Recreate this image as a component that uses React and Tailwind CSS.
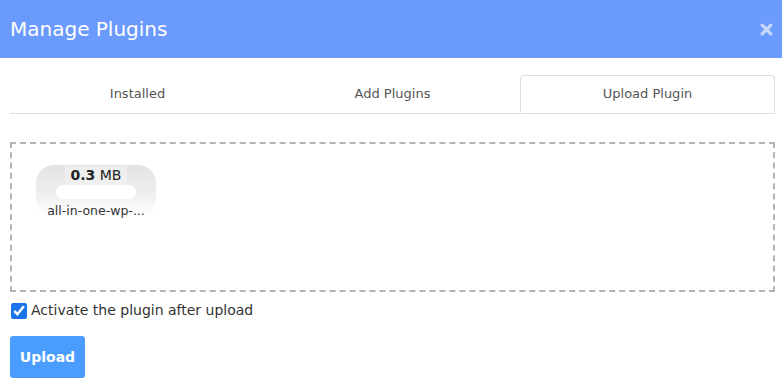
import { useState } from 'react';

export default function App() {
  const [tab, setTab] = useState('upload');
  const [activate, setActivate] = useState(true);

  const tabs = [
    { id: 'installed', label: 'Installed' },
    { id: 'add', label: 'Add Plugins' },
    { id: 'upload', label: 'Upload Plugin' },
  ];

  return (
    <div className="w-[782px] h-[385px] bg-white text-[#333] font-['DejaVu_Sans',sans-serif]">

      {/* HEADER */}
      <div className="h-[58px] bg-[#6b9aff] flex items-center justify-between pl-[10px] pr-[8px]">
        <h2 className="text-[20px] text-white">Manage Plugins</h2>
        <button className="text-[#c9d9fb] w-[16px] h-[16px] flex items-center justify-center">
          <svg width="13" height="13" viewBox="0 0 12 12">
            <path d="M2 2 L10 10 M10 2 L2 10" stroke="currentColor" strokeWidth="3" strokeLinecap="round" />
          </svg>
        </button>
      </div>

      <div className="px-[10px] pr-[7px]">

        {/* TABS */}
        <div className="mt-[17px] flex border-b border-[#dddddd]">
          {tabs.map((t) => (
            <button
              key={t.id}
              onClick={() => setTab(t.id)}
              className={
                t.id === tab
                  ? 'flex-1 h-[38px] -mb-px bg-white border border-[#dddddd] border-b-white rounded-t-[4px] text-[13px] text-[#555]'
                  : 'flex-1 h-[38px] text-[13px] text-[#555] border border-transparent'
              }
            >
              {t.label}
            </button>
          ))}
        </div>

        {/* DROPZONE */}
        <div className="mt-[28px] h-[150px] border-2 border-dashed border-[#b4b4b4] pl-[24px] pt-[21px]">
          <div className="w-[120px] flex flex-col items-center">
            <div className="w-[120px] h-[52px] rounded-[18px] bg-gradient-to-b from-[#e3e3e3] via-[#eeeeee] to-white flex flex-col items-center pt-[1px]">
              <div className="px-[6px] bg-[#efefef] text-[14px] leading-[19px] text-[#222]">
                <span className="font-bold">0.3</span> MB
              </div>
              <div className="w-[80px] h-[14px] rounded-full bg-white"></div>
            </div>
            <div className="-mt-[14px] text-[12.5px] leading-[16px] text-[#333] w-[130px] text-center whitespace-nowrap">
              all-in-one-wp-...
            </div>
          </div>
        </div>

        {/* OPTION */}
        <label className="mt-[8px] flex items-center gap-[4px] text-[14px] text-[#333]">
          <input
            type="checkbox"
            checked={activate}
            onChange={(e) => setActivate(e.target.checked)}
            className="w-[16px] h-[16px] accent-[#1a73e8] m-0 ml-[1px]"
          />
          Activate the plugin after upload
        </label>

        <button className="mt-[15px] w-[75px] h-[42px] rounded-[3px] bg-[#4a9dff] text-white text-[14px] font-semibold">
          Upload
        </button>
      </div>
    </div>
  );
}
